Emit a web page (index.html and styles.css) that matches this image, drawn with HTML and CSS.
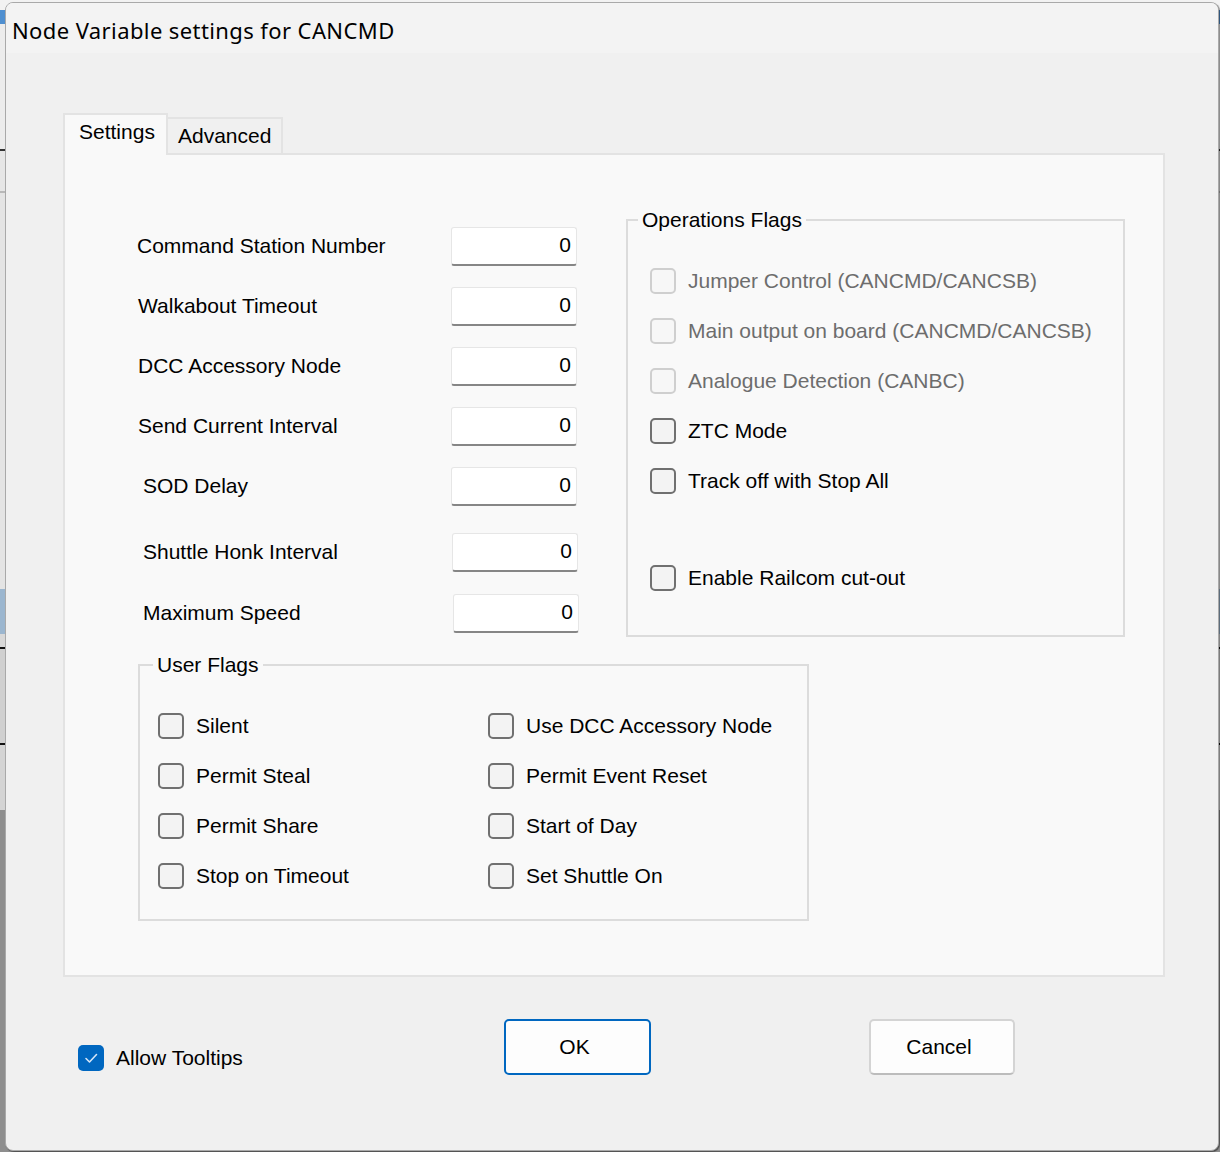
FILE: index.html
```html
<!DOCTYPE html>
<html>
<head>
<meta charset="utf-8">
<title>Node Variable settings for CANCMD</title>
<link rel="stylesheet" href="styles.css">
</head>
<body>
<div class="window">
  <div class="titlebar"><span class="title">Node Variable settings for CANCMD</span></div>
  <div class="client">
    <div class="tabs">
      <div class="tab tab-active">Settings</div>
      <div class="tab">Advanced</div>
    </div>
    <div class="panel">
      <div class="top-row">
        <div class="fields">
          <div class="row"><span class="lbl">Command Station Number</span><span class="num">0</span></div>
          <div class="row"><span class="lbl lbl-1">Walkabout Timeout</span><span class="num">0</span></div>
          <div class="row"><span class="lbl lbl-1">DCC Accessory Node</span><span class="num">0</span></div>
          <div class="row"><span class="lbl lbl-1">Send Current Interval</span><span class="num">0</span></div>
          <div class="row"><span class="lbl lbl-6">SOD Delay</span><span class="num">0</span></div>
          <div class="row row-gap6"><span class="lbl lbl-6">Shuttle Honk Interval</span><span class="num num-1">0</span></div>
          <div class="row row-gap1"><span class="lbl lbl-6">Maximum Speed</span><span class="num num-2">0</span></div>
        </div>
        <fieldset class="group ops">
          <legend>Operations Flags</legend>
          <div class="ops-list">
            <div class="check disabled"><span class="box"></span><span>Jumper Control (CANCMD/CANCSB)</span></div>
            <div class="check disabled"><span class="box"></span><span>Main output on board (CANCMD/CANCSB)</span></div>
            <div class="check disabled"><span class="box"></span><span>Analogue Detection (CANBC)</span></div>
            <div class="check"><span class="box"></span><span>ZTC Mode</span></div>
            <div class="check"><span class="box"></span><span>Track off with Stop All</span></div>
            <div class="check check-far"><span class="box"></span><span>Enable Railcom cut-out</span></div>
          </div>
        </fieldset>
      </div>
      <fieldset class="group user">
        <legend>User Flags</legend>
        <div class="user-grid">
          <div class="check"><span class="box"></span><span>Silent</span></div>
          <div class="check"><span class="box"></span><span>Use DCC Accessory Node</span></div>
          <div class="check"><span class="box"></span><span>Permit Steal</span></div>
          <div class="check"><span class="box"></span><span>Permit Event Reset</span></div>
          <div class="check"><span class="box"></span><span>Permit Share</span></div>
          <div class="check"><span class="box"></span><span>Start of Day</span></div>
          <div class="check"><span class="box"></span><span>Stop on Timeout</span></div>
          <div class="check"><span class="box"></span><span>Set Shuttle On</span></div>
        </div>
      </fieldset>
    </div>
    <div class="footer">
      <div class="check tooltips"><span class="box box-on"><svg viewBox="0 0 26 26" width="26" height="26"><polyline points="8,13.5 11.5,17 18.5,9.5" fill="none" stroke="#d6e6f7" stroke-width="1.6" stroke-linecap="round" stroke-linejoin="round"/></svg></span><span>Allow Tooltips</span></div>
      <button class="btn btn-default">OK</button>
      <button class="btn btn-cancel">Cancel</button>
    </div>
  </div>
</div>
</body>
</html>
```
FILE: styles.css
```css
html, body {
  margin: 0;
  padding: 0;
}
body {
  width: 1220px;
  height: 1152px;
  overflow: hidden;
  background:
    linear-gradient(to bottom,
      #f2f2f2 0, #f2f2f2 10px,
      #4f8fd0 10px, #4f8fd0 24px,
      #ececec 24px, #ececec 149px,
      #333 149px, #333 151px,
      #e6e6e6 151px, #e6e6e6 191px,
      #b8b8b8 191px, #b8b8b8 193px,
      #e4e4e4 193px, #e4e4e4 589px,
      #9bb6cf 589px, #9bb6cf 634px,
      #d8d8d8 634px, #d8d8d8 647px,
      #111 647px, #111 649px,
      #d0d0d0 649px, #d0d0d0 743px,
      #111 743px, #111 745px,
      #d4d4d4 745px, #d4d4d4 810px,
      #8e8e8e 810px, #8e8e8e 1152px);
  font-family: "Liberation Sans", Arial, sans-serif;
  font-size: 21px;
  color: #000;
}
.window {
  box-sizing: border-box;
  margin: 2px 0 0 5px;
  width: 1214px;
  height: 1149px;
  border: 1px solid #a9a9a9;
  border-radius: 8px;
  background: #f0f0f0;
  box-shadow: 1px 1px 1px rgba(0, 0, 0, 0.45);
  overflow: hidden;
  display: flex;
  flex-direction: column;
}
.titlebar {
  height: 50px;
  flex: none;
  background: #f3f3f3;
  padding-left: 6px;
  display: flex;
  align-items: center;
}
.title {
  font-family: "Noto Sans", "Open Sans", sans-serif;
  font-size: 22px;
  letter-spacing: 0.4px;
  line-height: 28px;
  margin-top: 4px;
  color: #000;
}
.client {
  flex: 1;
  display: flex;
  flex-direction: column;
}
.tabs {
  margin: 60px 0 0 57px;
  height: 40px;
  display: flex;
  align-items: flex-end;
}
.tab {
  box-sizing: border-box;
  height: 36px;
  width: 115px;
  padding-left: 10px;
  line-height: 34px;
  background: #f0f0f0;
  border: 2px solid #e3e3e3;
  border-left: none;
  border-bottom: none;
}
.tab-active {
  position: relative;
  z-index: 1;
  height: 42px;
  width: 105px;
  margin-bottom: -2px;
  padding-left: 14px;
  line-height: 34px;
  background: #f9f9f9;
  border-left: 2px solid #e3e3e3;
}
.panel {
  box-sizing: border-box;
  margin-left: 57px;
  width: 1102px;
  height: 824px;
  background: #f9f9f9;
  border: 2px solid #e3e3e3;
}
.top-row {
  display: flex;
  align-items: flex-start;
}
.fields {
  width: 561px;
  padding-top: 72px;
  display: flex;
  flex-direction: column;
  gap: 21px;
}
.row {
  height: 39px;
  display: flex;
  align-items: center;
}
.row-gap6 { margin-top: 6px; }
.row-gap1 { margin-top: 1px; }
.lbl {
  box-sizing: border-box;
  margin-left: 72px;
  width: 314px;
  white-space: nowrap;
  line-height: 26px;
  margin-top: -2px;
}
.lbl-1 { padding-left: 1px; }
.lbl-6 { padding-left: 6px; }
.num {
  box-sizing: border-box;
  width: 126px;
  height: 39px;
  background: #fff;
  border: 1px solid #e6e6e6;
  border-bottom: 2px solid #868686;
  border-radius: 3px;
  text-align: right;
  padding-right: 5px;
  line-height: 34px;
}
.num-1 { margin-left: 1px; }
.num-2 { margin-left: 2px; }
.group {
  box-sizing: border-box;
  margin: 0;
  padding: 0;
  min-width: 0;
  border: 2px solid #dcdcdc;
}
.group legend {
  padding: 0 4px;
  line-height: 26px;
  white-space: nowrap;
}
.ops {
  margin-top: 52px;
  width: 499px;
  height: 430px;
}
.ops legend { margin-left: 10px; }
.ops-list {
  padding: 35px 0 0 22px;
  display: flex;
  flex-direction: column;
  gap: 24px;
}
.check {
  height: 26px;
  display: flex;
  align-items: center;
  gap: 12px;
  white-space: nowrap;
  line-height: 26px;
}
.check-far { margin-top: 47px; }
.box {
  box-sizing: border-box;
  flex: none;
  width: 26px;
  height: 26px;
  border: 2px solid #707070;
  border-radius: 5px;
  background: #f3f3f3;
}
.disabled { color: #6d6d6d; }
.disabled .box {
  border-color: #cfcfcf;
  background: #f7f7f7;
}
.user {
  margin: 15px 0 0 73px;
  width: 671px;
  height: 269px;
}
.user legend { margin-left: 13px; }
.user-grid {
  padding: 35px 0 0 18px;
  display: grid;
  grid-template-columns: 330px 1fr;
  row-gap: 24px;
}
.footer {
  margin: 42px 0 0 72px;
  display: flex;
  align-items: flex-start;
}
.tooltips {
  margin-top: 26px;
  width: 426px;
}
.box-on {
  border: none;
  background: #0067c0;
  display: flex;
}
.btn {
  box-sizing: border-box;
  height: 56px;
  padding: 0 6px 0 0;
  font-family: "Liberation Sans", Arial, sans-serif;
  font-size: 21px;
  color: #000;
  background: #fdfdfd;
  border-radius: 5px;
}
.btn-default {
  width: 147px;
  border: 2px solid #0067c0;
}
.btn-cancel {
  width: 146px;
  margin-left: 218px;
  border: 2px solid #d4d4d4;
  border-bottom-color: #bcbcbc;
}
```
